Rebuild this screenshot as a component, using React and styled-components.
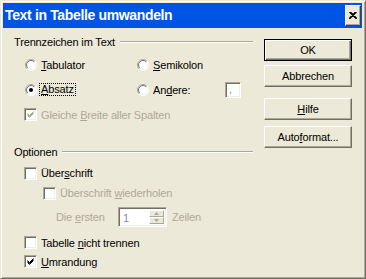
import React, { useId } from 'react';
import styled, { createGlobalStyle } from 'styled-components';

const Global = createGlobalStyle`
  html, body { margin: 0; padding: 0; background: #ECE9D8; }
  body { font-family: "Liberation Sans", Arial, sans-serif; font-size: 11px; }
  #root { width: 366px; height: 279px; }
`;

const Window = styled.div`
  box-sizing: border-box;
  width: 366px;
  height: 279px;
  background: #ECE9D8;
  border: 1px solid;
  border-color: #ECE9D8 #716F64 #716F64 #ECE9D8;
  box-shadow: inset 1px 1px #fff, inset -1px -1px #ACA899;
  padding: 2px;
  display: flex;
  flex-direction: column;
  color: #000;
  letter-spacing: -0.15px;
`;

const TitleBar = styled.div`
  height: 25px;
  margin-right: 1px;
  background: #0054E3;
  display: flex;
  align-items: center;
  padding: 0 1px 0 2px;
  color: #fff;
  font-weight: bold;
  font-size: 14px;
  letter-spacing: -0.35px;
`;

const TitleText = styled.span`
  flex: 1;
  line-height: 25px;
`;

const CloseButton = styled.div`
  box-sizing: border-box;
  width: 16px;
  height: 21px;
  background: #ECE9D8;
  border: 1px solid;
  border-color: #fff #404040 #404040 #fff;
  box-shadow: inset -1px -1px #ACA899;
  display: flex;
  align-items: center;
  justify-content: center;
`;

const Body = styled.div`
  flex: 1;
  display: flex;
  padding: 7px 0 0 11px;
`;

const LeftColumn = styled.div`
  width: 239px;
  display: flex;
  flex-direction: column;
`;

const GroupHeader = styled.div`
  display: flex;
  align-items: center;
  height: 13px;
  margin-top: ${p => p.$top || 0}px;
`;

const GroupLine = styled.div`
  flex: 1;
  margin-left: 5px;
  border-top: 1px solid #ACA899;
  border-bottom: 1px solid #fff;
`;

const RadioGrid = styled.div`
  display: grid;
  grid-template-columns: 112px 1fr;
  grid-auto-rows: 25px;
  padding-left: 11px;
  margin-top: 4px;
`;

const Item = styled.label`
  display: flex;
  align-items: center;
  gap: 4px;
  color: ${p => (p.$disabled ? '#ACA899' : '#000')};
`;

const Row = styled.div`
  display: flex;
  align-items: center;
  height: ${p => p.$h}px;
  margin-top: ${p => p.$top || 0}px;
  padding-left: ${p => p.$indent}px;
  color: ${p => (p.$disabled ? '#ACA899' : '#000')};
`;

const FocusLabel = styled.span`
  border: 1px dotted #000;
  padding: 0 1px;
  margin-left: -2px;
  line-height: 11px;
`;

const FixedLabel = styled.span`
  width: ${p => p.$w}px;
  flex: none;
`;

const SmallInput = styled.div`
  box-sizing: border-box;
  width: 16px;
  height: 16px;
  border: 1px solid;
  border-color: #ACA899 #fff #fff #ACA899;
  box-shadow: inset 1px 1px #716F64, inset -1px -1px #F1EFE2;
  background: #fff;
  color: #7F8FB0;
  font-size: 11px;
  line-height: 12px;
  padding-left: 3px;
`;

const U = styled.span`
  text-decoration: underline;
  text-underline-offset: 1px;
`;

const Box = styled.span`
  box-sizing: border-box;
  width: 13px;
  height: 13px;
  flex: none;
  border: 1px solid;
  border-color: #ACA899 #fff #fff #ACA899;
  box-shadow: inset 1px 1px #716F64, inset -1px -1px #F1EFE2;
  background: #fff;
  display: flex;
  align-items: center;
  justify-content: center;
`;

const SpinBox = styled.div`
  box-sizing: border-box;
  width: 49px;
  height: 20px;
  margin-right: 5px;
  border: 1px solid;
  border-color: #ACA899 #fff #fff #ACA899;
  box-shadow: inset 1px 1px #716F64, inset -1px -1px #F1EFE2;
  background: #fff;
  display: flex;
  padding: 2px;
`;

const SpinValue = styled.span`
  flex: 1;
  color: #7F8FB0;
  line-height: 16px;
  padding-left: 2px;
`;

const SpinButtons = styled.div`
  width: 15px;
  display: flex;
  flex-direction: column;
`;

const SpinButton = styled.div`
  flex: 1;
  box-sizing: border-box;
  background: #ECE9D8;
  border: 1px solid;
  border-color: #fff #ACA899 #ACA899 #fff;
  display: flex;
  align-items: center;
  justify-content: center;
`;

const ButtonColumn = styled.div`
  margin-left: 11px;
  padding-top: 4px;
  display: flex;
  flex-direction: column;
`;

const Button = styled.div`
  box-sizing: border-box;
  width: 88px;
  height: 22px;
  margin-top: ${p => p.$top || 0}px;
  background: #ECE9D8;
  border: 1px solid;
  border-color: ${p => (p.$default ? '#000' : '#fff #716F64 #716F64 #fff')};
  box-shadow: ${p =>
    p.$default
      ? 'inset 1px 1px #fff, inset -1px -1px #716F64, inset -2px -2px #ACA899'
      : 'inset -1px -1px #ACA899'};
  display: flex;
  align-items: center;
  justify-content: center;
  color: #000;
`;

function Radio({ checked }) {
  const id = useId().replace(/:/g, '');
  return (
    <svg width="12" height="12" viewBox="0 0 12 12" style={{ flex: 'none' }}>
      <defs>
        <linearGradient id={`o${id}`} x1="0" y1="0" x2="1" y2="1">
          <stop offset="0.45" stopColor="#ACA899" />
          <stop offset="0.55" stopColor="#fff" />
        </linearGradient>
        <linearGradient id={`i${id}`} x1="0" y1="0" x2="1" y2="1">
          <stop offset="0.45" stopColor="#716F64" />
          <stop offset="0.55" stopColor="#F1EFE2" />
        </linearGradient>
      </defs>
      <circle cx="6" cy="6" r="5.5" fill="#fff" stroke={`url(#o${id})`} strokeWidth="1" />
      <circle cx="6" cy="6" r="4.5" fill="none" stroke={`url(#i${id})`} strokeWidth="1" />
      {checked && <circle cx="6" cy="6" r="2" fill="#000" />}
    </svg>
  );
}

function Check({ checked, disabled }) {
  return (
    <Box>
      {checked && (
        <svg width="7" height="7" viewBox="0 0 7 7">
          <path d="M0.5 2.5 L2.5 4.5 L6.5 0.5 M0.5 3.5 L2.5 5.5 L6.5 1.5 M0.5 4.5 L2.5 6.5 L6.5 2.5"
            stroke={disabled ? '#ACA899' : '#000'} strokeWidth="1" fill="none" />
        </svg>
      )}
    </Box>
  );
}

function Arrow({ up }) {
  return (
    <svg width="5" height="3" viewBox="0 0 5 3">
      <path d={up ? 'M2.5 0 L5 3 L0 3 Z' : 'M0 0 L5 0 L2.5 3 Z'} fill="#ACA899" />
    </svg>
  );
}

export default function App() {
  return (
    <>
      <Global />
      <Window>
        <TitleBar>
          <TitleText>Text in Tabelle umwandeln</TitleText>
          <CloseButton>
            <svg width="8" height="7" viewBox="0 0 8 7">
              <path d="M0.5 0 L7.5 7 M1.5 0 L8 6.5 M7.5 0 L0.5 7 M6.5 0 L0 6.5" stroke="#000" strokeWidth="1.2" />
            </svg>
          </CloseButton>
        </TitleBar>
        <Body>
          <LeftColumn>
            <GroupHeader>
              <span>Trennzeichen im Text</span>
              <GroupLine />
            </GroupHeader>
            <RadioGrid>
              <Item><Radio /><span><U>T</U>abulator</span></Item>
              <Item><Radio /><span><U>S</U>emikolon</span></Item>
              <Item><Radio checked /><FocusLabel><U>A</U>bsatz</FocusLabel></Item>
              <Item>
                <Radio />
                <FixedLabel $w={68}>An<U>d</U>ere:</FixedLabel>
                <SmallInput>,</SmallInput>
              </Item>
            </RadioGrid>
            <Row $h={25} $indent={10} $disabled>
              <Item $disabled><Check checked disabled /><span>Gleiche <U>B</U>reite aller Spalten</span></Item>
            </Row>
            <GroupHeader $top={18}>
              <span>Optionen</span>
              <GroupLine />
            </GroupHeader>
            <Row $h={20} $top={5} $indent={10}>
              <Item><Check /><span>Über<U>s</U>chrift</span></Item>
            </Row>
            <Row $h={20} $indent={29}>
              <Item $disabled><Check /><span>Überschrift <U>w</U>iederholen</span></Item>
            </Row>
            <Row $h={24} $top={2} $indent={42} $disabled>
              <FixedLabel $w={62}>Die <U>e</U>rsten</FixedLabel>
              <SpinBox>
                <SpinValue>1</SpinValue>
                <SpinButtons>
                  <SpinButton><Arrow up /></SpinButton>
                  <SpinButton><Arrow /></SpinButton>
                </SpinButtons>
              </SpinBox>
              <span>Zeilen</span>
            </Row>
            <Row $h={19} $top={4} $indent={10}>
              <Item><Check /><span>Tabelle <U>n</U>icht trennen</span></Item>
            </Row>
            <Row $h={19} $indent={10}>
              <Item><Check checked /><span><U>U</U>mrandung</span></Item>
            </Row>
          </LeftColumn>
          <ButtonColumn>
            <Button $default>OK</Button>
            <Button $top={4}>Abbrechen</Button>
            <Button $top={11}><span><U>H</U>ilfe</span></Button>
            <Button $top={6}><span>Auto<U>f</U>ormat...</span></Button>
          </ButtonColumn>
        </Body>
      </Window>
    </>
  );
}
